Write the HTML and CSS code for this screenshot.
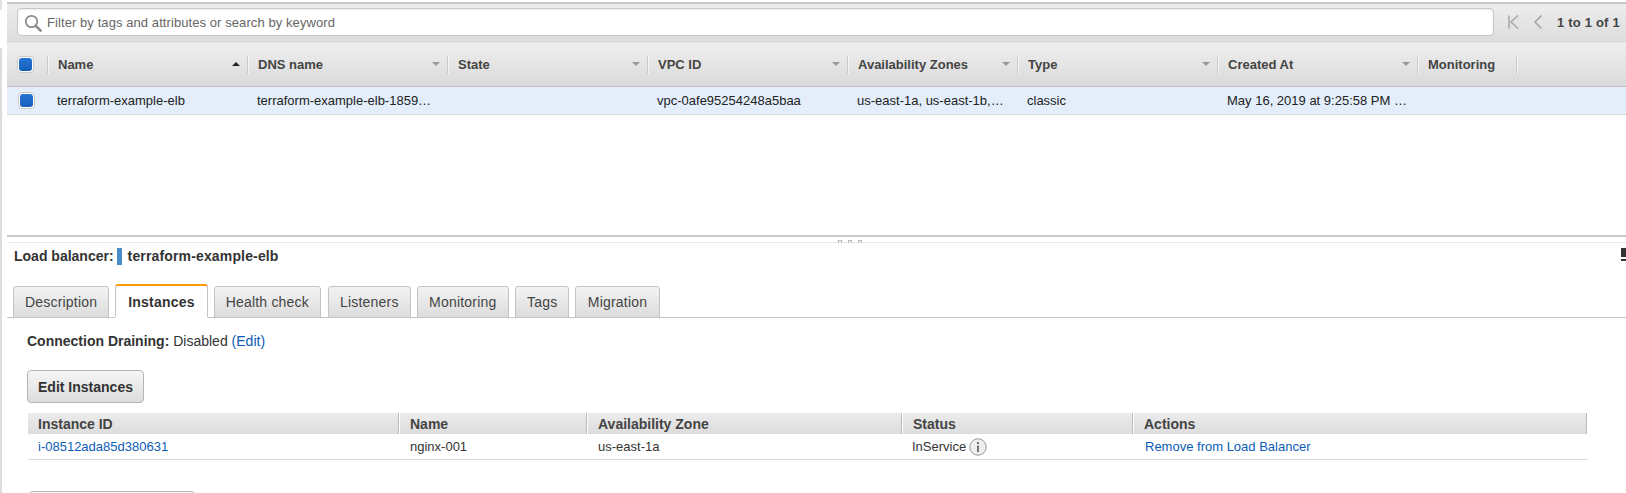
FILE: index.html
```html
<!DOCTYPE html>
<html lang="en">
<head>
    <meta charset="UTF-8">
    <meta name="viewport" content="width=device-width, initial-scale=1.0">
    <title>Load Balancers</title>
    <link rel="stylesheet" href="styles.css">
</head>
<body>
    <div class="shell">
        <div class="rail">
            <div class="rail-top"></div>
            <div class="rail-bottom"></div>
        </div>
        <div class="main">
            <!-- Filter and pager -->
            <div class="toolbar">
                <div class="search">
                    <svg class="search-icon" width="18" height="18" viewBox="0 0 18 18" fill="none" stroke="#8a8a8a">
                        <circle cx="7.5" cy="7.5" r="5.7" stroke-width="1.7"/>
                        <path d="M11.8 11.8 L16.6 16.6" stroke-width="2.6" stroke-linecap="round"/>
                    </svg>
                    <span>Filter by tags and attributes or search by keyword</span>
                </div>
                <div class="pager">
                    <svg width="11" height="14" viewBox="0 0 11 14" fill="none" stroke="#aaa" stroke-width="1.6">
                        <path d="M1 0.5 V13.5 M10 0.5 L3 7 L10 13.5"/>
                    </svg>
                    <svg class="pager-prev" width="8" height="14" viewBox="0 0 8 14" fill="none" stroke="#aaa" stroke-width="1.6">
                        <path d="M7.5 0.5 L1 7 L7.5 13.5"/>
                    </svg>
                    <span class="pager-text">1 to 1 of 1</span>
                </div>
            </div>

            <!-- Load balancer list -->
            <div class="grid grid-head">
                <div class="cell-check"><span class="check"></span></div>
                <div class="head-cell">Name<i class="sort sort-up"></i></div>
                <div class="head-cell">DNS name<i class="sort"></i></div>
                <div class="head-cell">State<i class="sort"></i></div>
                <div class="head-cell">VPC ID<i class="sort"></i></div>
                <div class="head-cell">Availability Zones<i class="sort"></i></div>
                <div class="head-cell">Type<i class="sort"></i></div>
                <div class="head-cell">Created At<i class="sort"></i></div>
                <div class="head-cell">Monitoring</div>
            </div>
            <div class="grid grid-row">
                <div class="cell-check"><span class="check"></span></div>
                <div class="row-cell">terraform-example-elb</div>
                <div class="row-cell">terraform-example-elb-1859…</div>
                <div class="row-cell"></div>
                <div class="row-cell">vpc-0afe95254248a5baa</div>
                <div class="row-cell">us-east-1a, us-east-1b,…</div>
                <div class="row-cell">classic</div>
                <div class="row-cell">May 16, 2019 at 9:25:58 PM …</div>
                <div class="row-cell"></div>
            </div>

            <!-- Drag handle -->
            <div class="sash">
                <div class="sash-dots"><i></i><i></i><i></i></div>
            </div>

            <!-- Details pane -->
            <div class="detail-title">
                <div class="detail-name">
                    <b>Load balancer:</b>
                    <i class="name-flag"></i>
                    <b class="name-value">terraform-example-elb</b>
                </div>
                <div class="maximize"></div>
            </div>

            <div class="tabs">
                <div class="tab">Description</div>
                <div class="tab tab-active">Instances</div>
                <div class="tab">Health check</div>
                <div class="tab tab-listeners">Listeners</div>
                <div class="tab tab-loose">Monitoring</div>
                <div class="tab">Tags</div>
                <div class="tab tab-loose">Migration</div>
            </div>

            <div class="panel">
                <p class="draining"><b>Connection Draining:</b> Disabled <a href="#">(Edit)</a></p>
                <button class="btn" type="button">Edit Instances</button>

                <div class="inst inst-head">
                    <div>Instance ID</div>
                    <div>Name</div>
                    <div>Availability Zone</div>
                    <div>Status</div>
                    <div>Actions</div>
                </div>
                <div class="inst inst-row">
                    <div><a href="#">i-08512ada85d380631</a></div>
                    <div>nginx-001</div>
                    <div>us-east-1a</div>
                    <div class="status">InService
                        <svg width="18" height="18" viewBox="0 0 18 18">
                            <circle cx="9" cy="9" r="8.2" fill="#eeeeee" stroke="#999"/>
                            <circle cx="9" cy="5" r="1.1" fill="#555"/>
                            <path d="M8.2 7.4 H9.8 V14 H8.2 Z" fill="#555"/>
                        </svg>
                    </div>
                    <div class="actions"><a href="#">Remove from Load Balancer</a></div>
                </div>

                <button class="btn btn-next" type="button"></button>
            </div>
        </div>
    </div>
</body>
</html>
```

FILE: styles.css
```css
/* Reset */
* {
    margin: 0;
    padding: 0;
    box-sizing: border-box;
}

body {
    font-family: 'Liberation Sans', Arial, sans-serif;
    font-size: 13px;
    color: #333;
    background: #fff;
    height: 100vh;
    overflow: hidden;
}

a {
    color: #0b5bb5;
    text-decoration: none;
}

.shell {
    display: flex;
    height: 493px;
    overflow: hidden;
}

/* Thin grey line down the left edge */
.rail {
    width: 7px;
    flex: none;
    display: flex;
    flex-direction: column;
}

.rail-top {
    width: 2px;
    height: 10px;
    margin-bottom: 38px;
    background: #e2e2e2;
}

.rail-bottom {
    width: 2px;
    flex: 1;
    background: #dcdcdc;
}

.main {
    flex: 1;
    min-width: 0;
    overflow: hidden;
}

/* Toolbar */
.toolbar {
    height: 42px;
    margin-top: 2px;
    padding-left: 10px;
    display: flex;
    align-items: flex-start;
    border-top: 2px solid #c9c9c9;
    border-bottom: 1px solid #f4f4f4;
    background: linear-gradient(#ededed, #dcdcdc);
}

.search {
    width: 1477px;
    height: 28px;
    margin-top: 4px;
    padding-left: 6px;
    display: flex;
    align-items: center;
    gap: 5px;
    background: #fff;
    border: 1px solid #c6c6c6;
    border-radius: 4px;
    box-shadow: inset 0 1px 2px rgba(0, 0, 0, 0.08);
    color: #666;
    letter-spacing: 0.08px;
}

.search-icon {
    margin-top: 2px;
}

.pager {
    height: 36px;
    padding-left: 14px;
    display: flex;
    align-items: center;
}

.pager-prev {
    margin-left: 15px;
}

.pager-text {
    margin-left: 15px;
    font-weight: bold;
    color: #444;
    white-space: nowrap;
    letter-spacing: 0.2px;
}

/* List grid */
.grid {
    display: grid;
    grid-template-columns: 40px 200px 200px 200px 200px 170px 200px 200px 100px;
}

.grid-head {
    height: 43px;
    background: linear-gradient(#eeeeee, #dadada);
    border-bottom: 1px solid #bdbdbd;
}

.grid-row {
    height: 28px;
    background: #e3eefa;
    border-bottom: 1px solid #d3dbe3;
}

.cell-check {
    display: flex;
    align-items: center;
    padding-left: 10px;
}

.grid-head .cell-check {
    padding-bottom: 2px;
}

.grid-row .cell-check {
    padding-left: 11px;
}

.check {
    width: 17px;
    height: 17px;
    padding: 1px;
    background: #fff;
    border: 1px solid #c9c9c9;
    border-radius: 4px;
    display: block;
}

.check::after {
    content: "";
    display: block;
    width: 100%;
    height: 100%;
    background: linear-gradient(#2474d4, #1660b8);
    border-radius: 3px;
}

.head-cell {
    position: relative;
    display: flex;
    align-items: center;
    padding: 0 0 2px 11px;
    font-weight: bold;
    color: #444;
}

/* Column separators */
.head-cell::before {
    content: "";
    position: absolute;
    left: 0;
    top: 12px;
    height: 18px;
    width: 1px;
    background: #c9c9c9;
    box-shadow: 1px 0 0 #f5f5f5;
}

.head-cell:last-child::after {
    content: "";
    position: absolute;
    right: 0;
    top: 12px;
    height: 18px;
    width: 1px;
    background: #c9c9c9;
    box-shadow: 1px 0 0 #f5f5f5;
}

.sort {
    margin-left: auto;
    margin-right: 7px;
    border-left: 4px solid transparent;
    border-right: 4px solid transparent;
    border-top: 4px solid #999;
}

.sort-up {
    border-top: 0;
    border-bottom: 4px solid #222;
}

.row-cell {
    display: flex;
    align-items: center;
    padding-left: 10px;
    white-space: nowrap;
    overflow: hidden;
    color: #222;
}

/* Sash */
.sash {
    height: 8px;
    margin-top: 120px;
    border-top: 2px solid #c9c9c9;
    border-bottom: 1px solid #eaeaea;
    position: relative;
}

.sash-dots {
    position: absolute;
    left: 831px;
    top: 3px;
    display: flex;
    gap: 6px;
}

.sash-dots i {
    width: 4px;
    height: 3px;
    border: 1px solid #bbb;
    border-bottom: 0;
    display: block;
}

/* Details */
.detail-title {
    height: 39px;
    padding-left: 7px;
    display: flex;
    justify-content: space-between;
    align-items: flex-start;
}

.detail-name {
    display: flex;
    align-items: center;
    height: 26px;
    font-size: 14px;
}

.name-flag {
    width: 5px;
    height: 17px;
    margin: 0 6px 0 3px;
    background: #4a8bc9;
}

.name-value {
    letter-spacing: 0.15px;
}

.maximize {
    width: 5px;
    height: 13px;
    margin-top: 5px;
    background: linear-gradient(#333 70%, #fff 70%, #fff 85%, #333 85%);
}

.tabs {
    height: 36px;
    padding: 2px 0 0 6px;
    display: flex;
    align-items: flex-end;
    gap: 6px;
    border-bottom: 1px solid #c4c4c4;
}

.tab {
    height: 32px;
    padding: 0 11px;
    margin-bottom: -1px;
    display: flex;
    align-items: center;
    justify-content: center;
    font-size: 14px;
    letter-spacing: 0.2px;
    color: #444;
    background: linear-gradient(#f3f3f3, #dcdcdc);
    border: 1px solid #c4c4c4;
    border-radius: 3px 3px 0 0;
}

.tab-listeners {
    min-width: 81px;
    margin-left: 1px;
}

.tab-loose {
    padding: 0 11.5px;
}

.tab-active {
    height: 34px;
    padding: 0 12px;
    font-weight: bold;
    color: #333;
    background: #fff;
    border-top: 2px solid #f90;
    border-bottom-color: #fff;
}

.panel {
    padding: 14px 38px 0 20px;
}

.draining {
    font-size: 14px;
    line-height: 18px;
}

.btn {
    display: block;
    width: 117px;
    height: 33px;
    margin-top: 20px;
    font-family: inherit;
    font-size: 14px;
    font-weight: bold;
    color: #333;
    background: linear-gradient(#f6f6f6, #dcdcdc);
    border: 1px solid #b5b5b5;
    border-radius: 4px;
}

.inst {
    display: grid;
    grid-template-columns: 372px 188px 315px 231px 1fr;
    margin-left: 1px;
}

.inst-head {
    height: 21px;
    margin-top: 10px;
    align-items: center;
    font-size: 14px;
    font-weight: bold;
    color: #444;
    background: linear-gradient(#ececec, #dcdcdc);
}

.inst-head div {
    padding-left: 10px;
    padding-top: 1px;
    line-height: 20px;
    border-right: 1px solid #fff;
    box-shadow: inset -1px 0 0 #bbb;
}

.inst-row {
    height: 26px;
    align-items: center;
    border-bottom: 1px solid #dcdcdc;
}

.inst-row div {
    padding-left: 10px;
}

.inst-row .status {
    display: flex;
    align-items: center;
    gap: 3px;
    padding-left: 9px;
}

.inst-row .actions {
    padding-left: 11px;
}

.btn-next {
    width: 166px;
    margin: 31px 0 0 2px;
}
```
